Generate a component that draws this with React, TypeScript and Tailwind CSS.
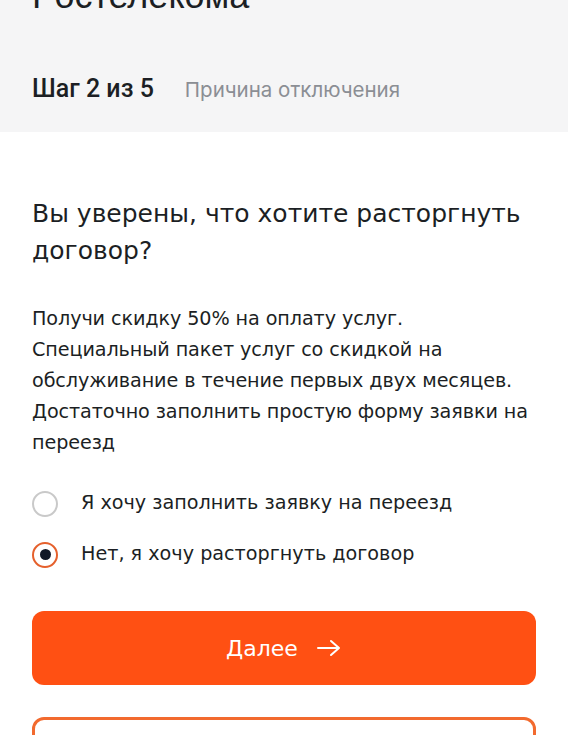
import React, { useState } from 'react';

const options = [
  'Я хочу заполнить заявку на переезд',
  'Нет, я хочу расторгнуть договор',
];

export default function App() {
  const [selected, setSelected] = useState(1);

  return (
    <div className="h-screen bg-white overflow-hidden font-['DejaVu_Sans',sans-serif] text-[#1c1f24]">
      {/* Header */}
      <section className="bg-[#f5f5f6] px-8 pb-[28px]">
        <h1 className="-mt-[26px] text-[36px] leading-[44px] font-medium font-['Liberation_Sans',sans-serif]">Ростелекома</h1>
        <div className="mt-[57px] flex items-baseline gap-[31px] leading-[28px]">
          <span className="text-[25px] font-medium font-['Roboto',sans-serif]">Шаг 2 из 5</span>
          <span className="text-[20.5px] text-[#8b8e94] font-['Inter',sans-serif]">Причина отключения</span>
        </div>
      </section>

      {/* Body */}
      <section className="px-8 pt-[63px]">
        <h2 className="text-[25px] leading-[37px]">
          Вы уверены, что хотите расторгнуть договор?
        </h2>
        <p className="mt-[34px] text-[19.2px] leading-[31px] tracking-[-0.1px]">
          Получи скидку 50% на оплату услуг.
          <br />
          Специальный пакет услуг со скидкой на
          <br />
          обслуживание в течение первых двух месяцев.
          <br />
          Достаточно заполнить простую форму заявки на
          <br />
          переезд
        </p>

        <div className="mt-[20px] flex flex-col">
          {options.map((label, i) => (
            <label key={label} className="flex h-[51px] items-center gap-[23px] cursor-pointer" onClick={() => setSelected(i)}>
              {selected === i ? (
                <span className="flex h-[26px] w-[26px] items-center justify-center rounded-full border-[2.5px] border-[#e5602c]">
                  <span className="h-[11px] w-[11px] rounded-full bg-[#111827]" />
                </span>
              ) : (
                <span className="h-[26px] w-[26px] rounded-full border-2 border-[#c9c9c9]" />
              )}
              <span className="text-[19.2px]">{label}</span>
            </label>
          ))}
        </div>

        <button className="mt-[31px] flex h-[74px] w-full items-center justify-center gap-[18px] rounded-[12px] bg-[#ff5013] text-white">
          <span className="text-[22px]">Далее</span>
          <svg width="26" height="20" viewBox="0 0 26 20" fill="none" stroke="currentColor" strokeWidth="2" strokeLinecap="round" strokeLinejoin="round">
            <path d="M2 10h21M15 3l8 7-8 7" />
          </svg>
        </button>

        <button className="mt-[32px] h-[74px] w-full rounded-[12px] border-[3px] border-[#f26a2e] bg-white" />
      </section>
    </div>
  );
}
